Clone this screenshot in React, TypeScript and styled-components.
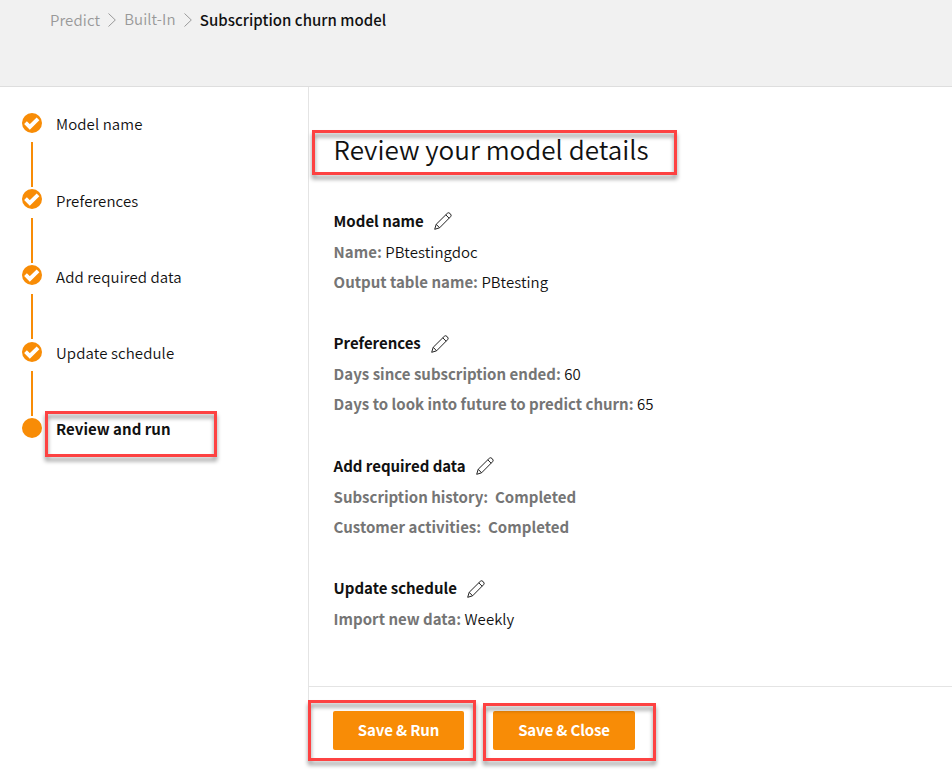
import React from 'react';
import styled, { createGlobalStyle } from 'styled-components';

const GlobalStyle = createGlobalStyle`
  *, *::before, *::after { box-sizing: border-box; }
  body { margin: 0; background: #fff; color: #111; font-family: "Noto Sans CJK SC", sans-serif; font-size: 15px; }
  h1, h2, p, ol { margin: 0; padding: 0; }
`;

const Page = styled.div`
  width: 952px;
  height: 779px;
  overflow: hidden;
  display: flex;
  flex-direction: column;
`;

const Header = styled.header`
  height: 87px;
  flex: none;
  background: #f1f1f1;
  border-bottom: 1px solid #dedede;
`;

const Breadcrumb = styled.nav`
  display: flex;
  align-items: flex-start;
  padding: 8px 0 0 50px;
  line-height: 24px;
`;

const Crumb = styled.span<{ $width: number; $raised?: boolean }>`
  width: ${p => p.$width}px;
  margin-top: ${p => (p.$raised ? -1 : 0)}px;
  color: #999;
  font-weight: 350;
  letter-spacing: 0.1px;
  white-space: nowrap;
`;

const CurrentCrumb = styled.span`
  color: #111;
  font-weight: 500;
  letter-spacing: 0.04px;
  white-space: nowrap;
`;

const Chevron = styled.svg`
  width: 8px;
  height: 14px;
  margin: 5px 8px 0;
`;

const Body = styled.div`
  flex: 1;
  display: flex;
  align-items: flex-start;
  min-height: 0;
`;

const Sidebar = styled.aside`
  width: 308px;
  padding: 26.4px 0 0 22px;
`;

const StepList = styled.ol`
  list-style: none;
`;

const Step = styled.li`
  height: 76.2px;
  display: grid;
  grid-template-columns: 20px 1fr;
  column-gap: 14px;
  align-items: start;
`;

const Marker = styled.div`
  display: flex;
  flex-direction: column;
  align-items: center;
  margin-top: -0.3px;
`;

const Dot = styled.svg`
  width: 20px;
  height: 20px;
  display: block;
`;

const Connector = styled.div`
  width: 2px;
  height: 45px;
  margin-top: 9px;
  background: #f88c06;
`;

const StepLabel = styled.span<{ $active?: boolean }>`
  position: relative;
  justify-self: start;
  font-weight: ${p => (p.$active ? 700 : 350)};
  letter-spacing: ${p => (p.$active ? 0.03 : 0.1)}px;
  line-height: 22px;
  white-space: nowrap;
`;

const Main = styled.main`
  flex: 1;
  height: 640px;
  border-left: 1px solid #e4e4e4;
`;

const Details = styled.div`
  height: 600px;
  padding: 43px 0 0 24.6px;
  border-bottom: 1px solid #e4e4e4;
`;

const Title = styled.h1`
  position: relative;
  width: max-content;
  font-size: 26.05px;
  font-weight: 350;
  line-height: 38px;
  margin-bottom: 37.7px;
`;

const Section = styled.section`
  margin-bottom: 31.5px;
`;

const SectionHead = styled.h2`
  display: flex;
  align-items: flex-start;
  gap: 9.5px;
  font-size: 15px;
  font-weight: 700;
  letter-spacing: -0.02px;
  line-height: 30px;
  height: 31px;
`;

const Pencil = styled.svg`
  width: 20px;
  height: 20px;
  margin-top: 5.4px;
`;

const Field = styled.p`
  line-height: 30px;
  font-weight: 350;
  letter-spacing: 0.06px;
  white-space: pre;
`;

const FieldName = styled.span`
  font-weight: 700;
  letter-spacing: 0.01px;
  color: #757575;
`;

const Footer = styled.footer`
  display: flex;
  gap: 29px;
  padding: 24px 0 0 24px;
`;

const ButtonWrap = styled.div`
  position: relative;
`;

const Button = styled.button<{ $width: number }>`
  display: block;
  width: ${p => p.$width}px;
  height: 39px;
  padding: 0 0 2px;
  border: 0;
  border-radius: 2px;
  background: #f88c06;
  color: #fff;
  font: 700 15px/37px "Noto Sans CJK SC", sans-serif;
  letter-spacing: -0.14px;
`;

const Callout = styled.span<{ $x: number; $y: number; $w: number; $h: number }>`
  position: absolute;
  left: ${p => p.$x}px;
  top: ${p => p.$y}px;
  width: ${p => p.$w}px;
  height: ${p => p.$h}px;
  border: 3px solid #fd4242;
  filter: drop-shadow(0 4px 2px rgba(0, 0, 0, 0.42));
  pointer-events: none;
`;

const ChevronIcon = () => (
  <Chevron viewBox="0 0 8 14" fill="none" stroke="#999" strokeWidth="1">
    <path d="M0.5 0.5 7.3 7 0.5 13.5" />
  </Chevron>
);

const StepDot = ({ done }: { done: boolean }) => (
  <Dot viewBox="0 0 20 20">
    <circle cx="10" cy="10" r="10" fill="#f88c06" />
    {done && <path d="M3.5 9.7 7.8 13.9 16 5.9" fill="none" stroke="#fff" strokeWidth="3.9" />}
  </Dot>
);

const PencilIcon = () => (
  <Pencil viewBox="0 0 20 20" fill="none" stroke="#222" strokeWidth="1" strokeLinejoin="round">
    <path d="M1.7 18.3 3.2 13.3 14.3 2.3Q15.6 1 17.2 2.6 19 4.3 17.6 5.7L6.6 16.8ZM3.2 13.3 6.6 16.8M12.8 3.8 16.1 7.2" />
  </Pencil>
);

const steps = ['Model name', 'Preferences', 'Add required data', 'Update schedule', 'Review and run'];

const sections = [
  { title: 'Model name', fields: [['Name:', 'PBtestingdoc'], ['Output table name:', 'PBtesting']] },
  { title: 'Preferences', fields: [['Days since subscription ended:', '60'], ['Days to look into future to predict churn:', '65']] },
  { title: 'Add required data', fields: [['Subscription history:  Completed', ''], ['Customer activities:  Completed', '']] },
  { title: 'Update schedule', fields: [['Import new data:', 'Weekly']] },
];

export default function App() {
  return (
    <Page>
      <GlobalStyle />
      <Header>
        <Breadcrumb>
          <Crumb $width={50.2}>Predict</Crumb>
          <ChevronIcon />
          <Crumb $width={51.6} $raised>Built-In</Crumb>
          <ChevronIcon />
          <CurrentCrumb>Subscription churn model</CurrentCrumb>
        </Breadcrumb>
      </Header>
      <Body>
        <Sidebar>
          <StepList>
            {steps.map((name, i) => {
              const last = i === steps.length - 1;
              return (
                <Step key={name}>
                  <Marker>
                    <StepDot done={!last} />
                    {!last && <Connector />}
                  </Marker>
                  <StepLabel $active={last}>
                    {name}
                    {last && <Callout $x={-11} $y={-7} $w={172} $h={46} />}
                  </StepLabel>
                </Step>
              );
            })}
          </StepList>
        </Sidebar>
        <Main>
          <Details>
            <Title>
              Review your model details
              <Callout $x={-21.6} $y={0} $w={365} $h={45} />
            </Title>
            {sections.map(s => (
              <Section key={s.title}>
                <SectionHead>{s.title}<PencilIcon /></SectionHead>
                {s.fields.map(([name, value]) => (
                  <Field key={name}><FieldName>{name}</FieldName>{value && ` ${value}`}</Field>
                ))}
              </Section>
            ))}
          </Details>
          <Footer>
            <ButtonWrap>
              <Button $width={131}>Save &amp; Run</Button>
              <Callout $x={-25} $y={-11} $w={168} $h={61} />
            </ButtonWrap>
            <ButtonWrap>
              <Button $width={142}>Save &amp; Close</Button>
              <Callout $x={-10} $y={-8} $w={173} $h={58} />
            </ButtonWrap>
          </Footer>
        </Main>
      </Body>
    </Page>
  );
}
